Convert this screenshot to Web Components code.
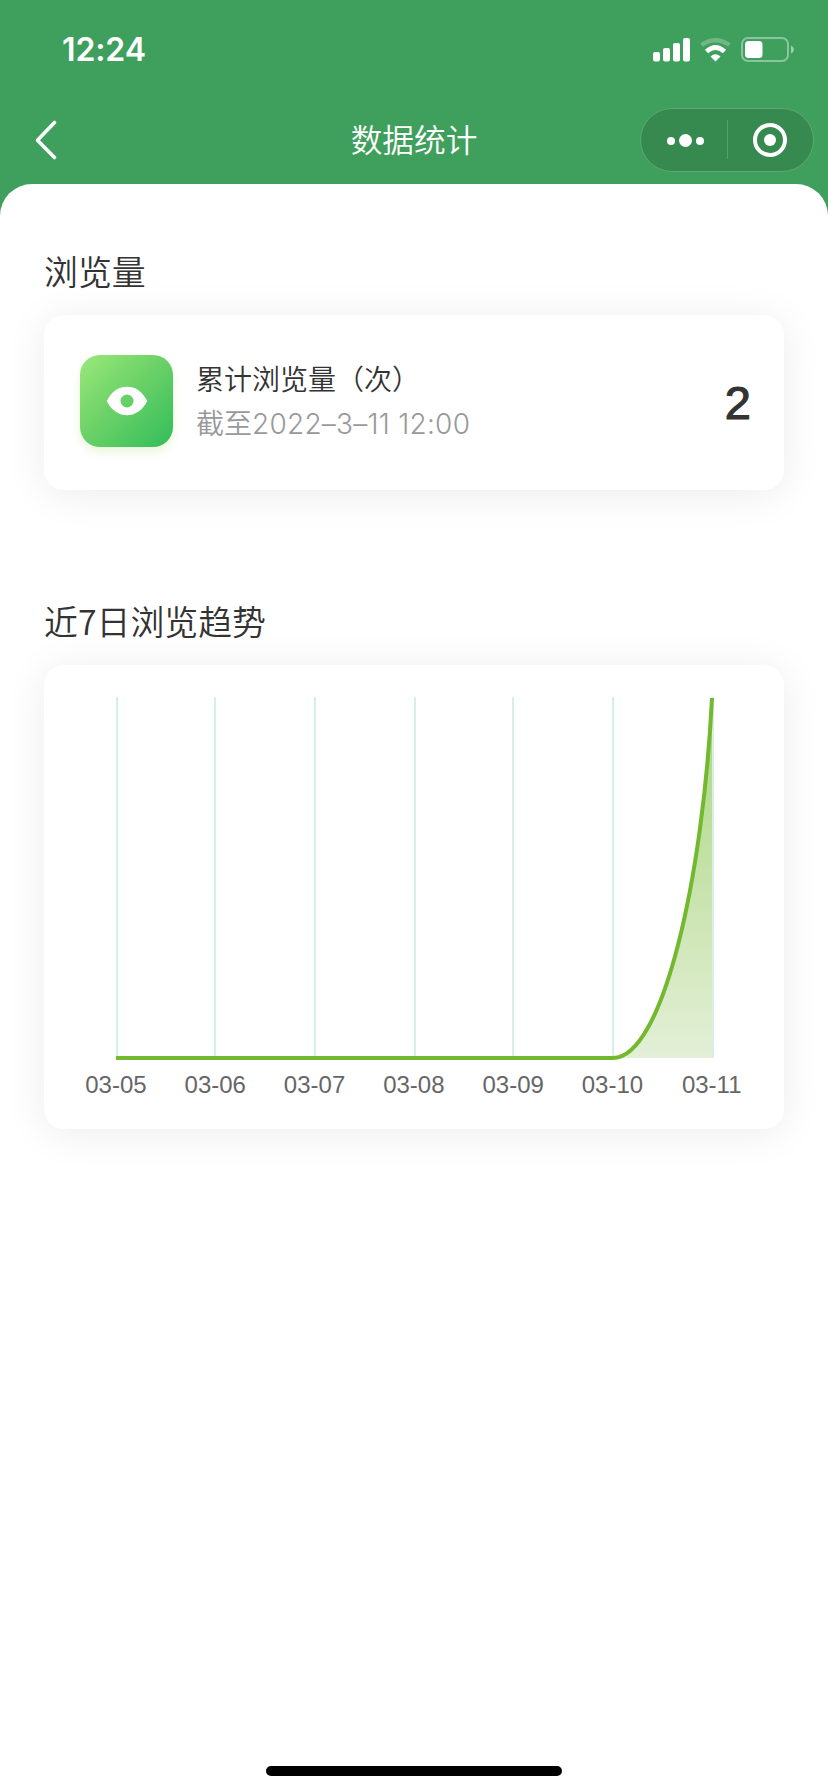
<!DOCTYPE html>
<html lang="zh-CN">
<head>
<meta charset="utf-8">
<title>数据统计</title>
<style>
html,body{margin:0;padding:0;background:#3f9f5c}
body{font-family:"Noto Sans CJK SC",sans-serif;color:#333}
</style>
</head>
<body>
<stats-page>
  <status-bar slot="top" time="12:24"></status-bar>
  <nav-bar slot="top">数据统计</nav-bar>
  <stats-section heading="浏览量">
    <view-total count="2"><span>累计浏览量（次）</span><span slot="until">截至<i>2022–3–11 12:00</i></span></view-total>
  </stats-section>
  <stats-section heading="近7日浏览趋势">
    <trend-chart days="03-05,03-06,03-07,03-08,03-09,03-10,03-11"></trend-chart>
  </stats-section>
</stats-page>
<script>
function define(name, html, setup) {
  const t = document.createElement('template');
  t.innerHTML = html;
  customElements.define(name, class extends HTMLElement {
    constructor() {
      super();
      this.attachShadow({mode: 'open'}).append(t.content.cloneNode(true));
    }
    connectedCallback() { if (setup) setup(this, this.shadowRoot); }
  });
}

define('stats-page', `
<style>
:host{display:flex;flex-direction:column;width:828px;height:1792px;background:#3f9f5c;overflow:hidden}
header{height:184px;flex:none}
main{flex:1;display:flex;flex-direction:column;gap:103px;background:#fff;border-radius:32px 32px 0 0;padding:59px 44px 0}
footer{flex:none;height:26px;background:#fff;display:flex;justify-content:center;align-items:flex-start}
footer div{width:296px;height:10px;border-radius:5px;background:#000}
</style>
<header><slot name="top"></slot></header>
<main><slot></slot></main>
<footer><div></div></footer>`);

define('status-bar', `
<style>
:host{display:flex;height:100px;justify-content:space-between;box-sizing:border-box;padding:0 34px 0 62px;color:#fff}
b{font:600 32px/100px Inter,sans-serif;letter-spacing:-.1px}
svg{display:block;margin-top:34px}
</style>
<b></b>
<svg width="144" height="32" viewBox="650 34 144 32">
  <g fill="#fff"><rect x="653" y="52" width="7" height="9.5" rx="2"/><rect x="663" y="48" width="7" height="13.5" rx="2"/><rect x="673" y="43" width="7" height="18.5" rx="2"/><rect x="683" y="38" width="7" height="23.5" rx="2"/></g>
  <path d="M701.500 45Q715.500 35.500 729.500 45" fill="none" stroke="#fff" stroke-opacity=".25" stroke-width="4.500"/>
  <path d="M706.500 51.500Q715.500 43.500 724.500 51.500" fill="none" stroke="#fff" stroke-width="5"/>
  <path d="M710.500 56.500Q715.500 52 720.500 56.500L715.500 61.500Z" fill="#fff"/>
  <rect x="742" y="38" width="46" height="23" rx="6" fill="none" stroke="#fff" stroke-opacity=".4" stroke-width="2"/>
  <rect x="745" y="41" width="17.500" height="17" rx="3.500" fill="#fff"/>
  <path d="M791 45.500Q794 47 794 49.500T791 53.500Z" fill="#fff" fill-opacity=".5"/>
</svg>`, (h, r) => { r.querySelector('b').textContent = h.getAttribute('time'); });

define('nav-bar', `
<style>
:host{display:grid;grid-template-columns:200px 1fr 200px;height:84px;color:#fff;align-items:center}
h1{margin:0;font-size:31.700px;font-weight:350;line-height:76px;height:84px;text-align:center}
.back{margin:-4px 0 0 33px}
.capsule{display:flex;align-items:center;box-sizing:border-box;width:174px;height:64px;border:1px solid #5aa971;border-radius:32px;background:#36894f;margin:-5px 0 0 12px}
.capsule svg{display:block}
</style>
<svg class="back" width="26" height="44" viewBox="33 118 26 44"><path d="M54.500 122.500 37.500 140.200 54.500 157.500" fill="none" stroke="#fff" stroke-width="3.600" stroke-linecap="round" stroke-linejoin="round"/></svg>
<h1><slot></slot></h1>
<div class="capsule"><svg width="172" height="62" viewBox="641 109 172 62"><g fill="#fff"><circle cx="671" cy="141" r="4"/><circle cx="685.500" cy="140.500" r="6.500"/><circle cx="700" cy="141" r="4"/><circle cx="770" cy="140" r="6"/></g><path d="M727.500 120V159" stroke="#579f6c"/><circle cx="770" cy="140" r="15" fill="none" stroke="#fff" stroke-width="4"/></svg></div>`);

define('stats-section', `
<style>
:host{display:block}
h2{margin:0 0 12px;font-size:33.900px;font-weight:350;line-height:56px;height:60px}
.card{border-radius:20px;background:#fff;box-shadow:0 4px 40px rgba(0,0,0,.08)}
</style>
<h2></h2><div class="card"><slot></slot></div>`, (h, r) => { r.querySelector('h2').textContent = h.getAttribute('heading'); });

define('view-total', `
<style>
:host{display:flex;align-items:center;height:175px;box-sizing:border-box;padding:0 33px 3px 36px}
.tile{width:93px;height:92px;border-radius:20px;background:linear-gradient(135deg,#9ae97b,#6dd268 45%,#32bd59);box-shadow:0 6px 8px rgba(170,220,110,.22);display:flex;align-items:center;justify-content:center}
.text{flex:1;margin:-2px 0 0 23px;display:flex;flex-direction:column;font-size:28px;font-weight:350;line-height:44px}
.sub{color:#999}
::slotted(span){white-space:nowrap}
b{font:400 47px/50px "Liberation Sans",sans-serif;-webkit-text-stroke:1.200px #333;margin-top:3px}
</style>
<div class="tile"><svg width="42" height="30" viewBox="0 0 42 30"><path fill="#fff" fill-rule="evenodd" d="M.7 15C6 5 13 .8 21 .8S36 5 41.300 15C36 25 29 29.200 21 29.200S6 25 .7 15ZM21 8.500a6.500 6.500 0 1 0 0 13 6.500 6.500 0 0 0 0-13Z"/></svg></div>
<div class="text"><slot></slot><div class="sub"><date-text><slot name="until"></slot></date-text></div></div>
<b></b>`, (h, r) => {
  r.querySelector('b').textContent = h.getAttribute('count');
  const i = h.querySelector('i');
  i.style.cssText = 'font:300 28px Inter,sans-serif;letter-spacing:.25px';
});

define('date-text', `<style>:host{display:block}</style><slot></slot>`);

define('trend-chart', `
<style>
:host{display:block;height:464px;box-sizing:border-box;padding-top:30px}
svg{display:block;width:740px;height:370px}
.days{display:grid;grid-template-columns:repeat(7,99.300px);margin-left:22.300px;font:24px/40px "Liberation Sans",sans-serif;color:#666;text-align:center}
</style>
<svg viewBox="44 695 740 370">
  <defs><linearGradient id="fill" gradientUnits="userSpaceOnUse" x1="0" y1="698" x2="0" y2="1058"><stop stop-color="#a9d67d"/><stop offset="1" stop-color="#e3efd7"/></linearGradient></defs>
  <path d="M613 1058C663 1058 703 878 712 698V1058Z" fill="url(#fill)"/>
  <path d="M117 697V1058M215 697V1058M315 697V1058M415 697V1058M513 697V1058M613 697V1058M713 697V1058" stroke="#d3eee3" stroke-width="1.800"/>
  <path d="M116 1058H613C663 1058 703 878 712 698" fill="none" stroke="#73b92f" stroke-width="4"/>
</svg>
<div class="days"></div>`, (h, r) => {
  r.querySelector('.days').replaceChildren(...h.getAttribute('days').split(',').map(d => {
    const s = document.createElement('span');
    s.textContent = d;
    return s;
  }));
});
</script>
</body>
</html>
